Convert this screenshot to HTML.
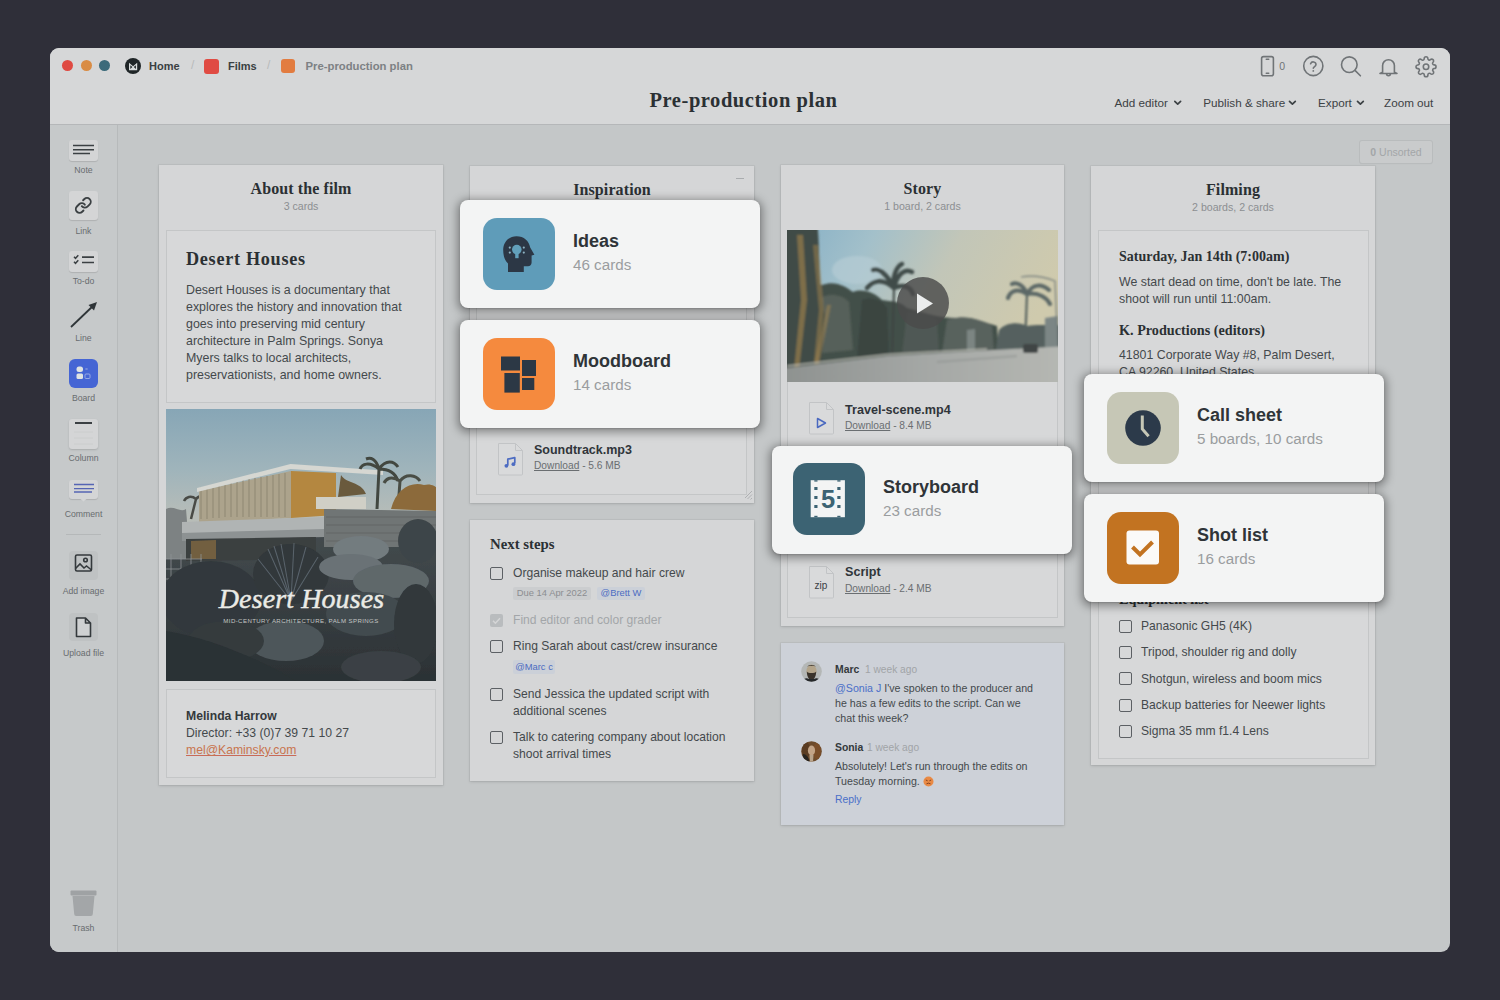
<!DOCTYPE html>
<html><head><meta charset="utf-8">
<style>
*{box-sizing:border-box;margin:0;padding:0}
html,body{width:1500px;height:1000px;overflow:hidden;background:#2f2f39;font-family:"Liberation Sans",sans-serif;color:#34393c}
.abs{position:absolute}
#win{position:absolute;left:50px;top:48px;width:1400px;height:904px;border-radius:9px;overflow:hidden;background:#c4c7c8}
#hdr{position:absolute;left:0;top:0;width:1400px;height:77px;background:#d6d7d8;border-bottom:1px solid #b5b7b9}
#side{position:absolute;left:0;top:77px;width:68px;height:827px;background:#c6c9ca;border-right:1px solid #b7babb}
.dot{position:absolute;top:12px;width:11px;height:11px;border-radius:50%}
.crumb{position:absolute;top:11px;font-size:11px;font-weight:bold;color:#3a3f42;line-height:14px}
.slash{position:absolute;top:10px;font-size:12px;color:#b8babb}
.menu{position:absolute;top:48px;font-size:11.7px;color:#3d4245;line-height:14px}
.chev{display:inline-block;width:5px;height:5px;border-right:1.5px solid #3d4245;border-bottom:1.5px solid #3d4245;transform:rotate(45deg);margin-left:5px;position:relative;top:-3px}
.sbtn{position:absolute;left:19px;width:29px;background:#d4d5d6;border-radius:3px;box-shadow:0 1px 1px rgba(0,0,0,.12)}
.slab{position:absolute;left:0;width:67px;text-align:center;font-size:8.7px;color:#686c6f;line-height:10px}
.col{position:absolute;background:#d5d6d7;box-shadow:0 0 0 1px #c9cbcc,0 1px 2px rgba(0,0,0,.18)}
.ctitle{position:absolute;left:0;width:100%;text-align:center;font-family:"Liberation Serif",serif;font-weight:bold;font-size:15px;color:#2b3033;line-height:18px}
.csub{position:absolute;left:0;width:100%;text-align:center;font-size:10px;color:#8d9093;line-height:12px}
.card{position:absolute;background:#d6d7d8;border:1px solid #c6c8c9}
.hl{position:absolute;width:300px;height:108px;background:#f3f4f4;border-radius:8px;box-shadow:0 2px 9px 3px rgba(0,0,0,.34),0 1px 2px rgba(0,0,0,.15)}
.hl .ic{position:absolute;left:23px;top:18px;width:72px;height:72px;border-radius:14px}
.hl .t{position:absolute;left:113px;top:30px;font-size:18px;font-weight:bold;color:#2f3438;line-height:22px}
.hl .s{position:absolute;left:113px;top:56px;font-size:15.2px;color:#9a9d9f;line-height:18px}
.txt{font-size:11.5px;color:#3e4347;line-height:17px}
.cb{position:absolute;width:12px;height:12px;border:1.3px solid #55595c;border-radius:2px}
.todo{position:absolute;font-size:11.5px;color:#3e4347;line-height:17px}
.tag{position:absolute;font-size:9px;line-height:13px;padding:0 4px;border-radius:2px}

.a{position:absolute}
</style></head><body>
<div id="win">
  <div id="hdr">
    <div class="dot" style="left:12px;background:#df4a42"></div>
    <div class="dot" style="left:31px;background:#d98c45"></div>
    <div class="dot" style="left:49px;background:#3c6a7a"></div>
    <div class="abs" style="left:74.9px;top:10px;width:16.4px;height:16.4px;border-radius:50%;background:#1f2527"></div>
    <svg class="abs" style="left:77px;top:11px" width="13" height="13" viewBox="0 0 13 13"><path d="M2 3.7 L6.1 7.3 L10.2 3.7 V11.2 H2 Z M3.3 6.2 L5.4 8.1 L3.3 10 Z M8.9 6.2 L6.8 8.1 L8.9 10 Z" fill="#d8dcdc" fill-rule="evenodd"/></svg>
    <div class="crumb" style="left:99px">Home</div>
    <div class="slash" style="left:141px">/</div>
    <div class="abs" style="left:154px;top:11px;width:15px;height:15px;border-radius:3px;background:#e04b43"></div>
    <div class="crumb" style="left:178px">Films</div>
    <div class="slash" style="left:217px">/</div>
    <div class="abs" style="left:231px;top:11px;width:14px;height:14px;border-radius:3px;background:#e27c40"></div>
    <div class="crumb" style="left:255.5px;color:#7d8184;font-size:11.3px">Pre-production plan</div>
    <div class="abs" style="left:0;top:40px;width:1387px;text-align:center;font-family:'Liberation Serif',serif;font-weight:bold;font-size:20.5px;letter-spacing:.55px;color:#2b3034;line-height:24px">Pre-production plan</div>
    <svg class="abs" style="left:1208px;top:6px" width="230" height="26" viewBox="0 0 230 26">
      <g fill="none" stroke="#707477" stroke-width="1.6" stroke-linecap="round" stroke-linejoin="round">
        <rect x="3.6" y="2.6" width="11.8" height="19.2" rx="2"/>
        <path d="M8.3 5.2 h2.4 M8.3 19.3 h2.4"/>
        <circle cx="55.3" cy="12" r="9.6"/>
        <path d="M52.6 9.7 a2.8 2.8 0 0 1 5.4 .9 c0 1.9-2.7 2.6-2.7 3.6"/>
        <circle cx="91.3" cy="10.7" r="7.8"/>
        <path d="M97 16.4 L102.4 21.8"/>
        <path d="M124.6 18.2 V11.6 a5.9 5.9 0 0 1 11.8 0 V18.2 l2.6 1.3 H122 z"/>
        <path d="M128.6 19.8 a1.9 1.9 0 0 0 3.8 0"/>
        <g transform="translate(157.1 1.8) scale(.91)" stroke-width="1.75"><circle cx="12" cy="12" r="3"/><path d="M19.4 15a1.65 1.65 0 0 0 .33 1.82l.06.06a2 2 0 0 1 0 2.83 2 2 0 0 1-2.83 0l-.06-.06a1.65 1.65 0 0 0-1.820-.33 1.65 1.65 0 0 0-1 1.51V21a2 2 0 0 1-2 2 2 2 0 0 1-2-2v-.09A1.65 1.65 0 0 0 9 19.4a1.65 1.65 0 0 0-1.82.33l-.06.06a2 2 0 0 1-2.83 0 2 2 0 0 1 0-2.83l.06-.06a1.65 1.65 0 0 0 .33-1.820 1.65 1.65 0 0 0-1.51-1H3a2 2 0 0 1-2-2 2 2 0 0 1 2-2h.09A1.65 1.65 0 0 0 4.6 9a1.65 1.65 0 0 0-.33-1.82l-.06-.06a2 2 0 0 1 0-2.83 2 2 0 0 1 2.83 0l.06.06a1.65 1.65 0 0 0 1.82.33H9a1.65 1.65 0 0 0 1-1.51V3a2 2 0 0 1 2-2 2 2 0 0 1 2 2v.09a1.65 1.65 0 0 0 1 1.51 1.65 1.65 0 0 0 1.82-.33l.06-.06a2 2 0 0 1 2.83 0 2 2 0 0 1 0 2.83l-.06.06a1.65 1.65 0 0 0-.33 1.82V9a1.65 1.65 0 0 0 1.51 1H21a2 2 0 0 1 2 2 2 2 0 0 1-2 2h-.09a1.65 1.65 0 0 0-1.51 1z"/></g>
      </g>
      <circle cx="55.3" cy="16.9" r=".9" fill="#707477"/>
      <text x="21.2" y="16.3" font-family="Liberation Sans" font-size="10.5" fill="#707477">0</text>
    </svg>
    <div class="menu" style="left:1064.5px">Add editor</div>
    <div class="menu" style="left:1153.3px">Publish &amp; share</div>
    <div class="menu" style="left:1268px">Export</div>
    <div class="menu" style="left:1334px">Zoom out</div>
    <svg class="abs" style="left:1120px;top:51px" width="250" height="8" viewBox="0 0 250 8"><g fill="none" stroke="#3d4245" stroke-width="1.7" stroke-linecap="round" stroke-linejoin="round"><path d="M4.8 2.3 l2.9 2.9 l2.9-2.9"/><path d="M119.5 2.3 l2.9 2.9 l2.9-2.9"/><path d="M187.5 2.3 l2.9 2.9 l2.9-2.9"/></g></svg>
  </div>
  <div id="side">
    <!-- y offsets relative to side top (page y - 125) -->
    <div class="sbtn" style="top:15px;height:21px"></div>
    <svg class="abs" style="left:19px;top:15px" width="29" height="21"><path d="M4 5.5h21M4 9.7h21M4 13.5h17" stroke="#3b4043" stroke-width="1.6"/></svg>
    <div class="slab" style="top:40px">Note</div>
    <div class="sbtn" style="top:66px;height:29px"></div>
    <svg class="abs" style="left:19px;top:66px" width="29" height="29" viewBox="0 0 29 29"><g transform="translate(5.3 5.4) scale(.75)" fill="none" stroke="#3b4043" stroke-width="2.5" stroke-linecap="round" stroke-linejoin="round"><path d="M10 13a5 5 0 0 0 7.54.54l3-3a5 5 0 0 0-7.07-7.07l-1.72 1.71"/><path d="M14 11a5 5 0 0 0-7.54-.54l-3 3a5 5 0 0 0 7.07 7.07l1.71-1.71"/></g></svg>
    <div class="slab" style="top:101px">Link</div>
    <div class="sbtn" style="top:126px;height:21px"></div>
    <svg class="abs" style="left:19px;top:126px" width="29" height="21" viewBox="0 0 29 21"><g fill="none" stroke="#3b4043" stroke-width="1.5"><path d="M5 5.8l1.5 1.5l2.8-3M5 10.8l1.5 1.5l2.8-3"/><path d="M13 6.2h12M13 11.5h12" stroke-width="1.7"/></g></svg>
    <div class="slab" style="top:151px">To-do</div>
    <svg class="abs" style="left:14px;top:172px" width="40" height="36" viewBox="0 0 40 36"><path d="M7 30 L30 8" stroke="#2f3538" stroke-width="1.8"/><path d="M33 5 L24.5 8 L30 13.5 Z" fill="#2f3538"/></svg>
    <div class="slab" style="top:208px">Line</div>
    <div class="abs" style="left:19px;top:234px;width:29px;height:29px;border-radius:6px;background:#4565d4"></div>
    <svg class="abs" style="left:19px;top:234px" width="29" height="29" viewBox="0 0 29 29"><rect x="7.5" y="7.5" width="6.5" height="5.5" rx="2.5" fill="#dfe3e2"/><rect x="7.5" y="14.5" width="6.5" height="5.5" rx="1.5" fill="#dfe3e2"/><path d="M16.5 9 l2 2 M16.5 11 l2-2" stroke="#8ea0dd" stroke-width=".8"/><rect x="16" y="15" width="5" height="4.5" rx="1" fill="none" stroke="#9fb0e6" stroke-width=".9"/></svg>
    <div class="slab" style="top:268px">Board</div>
    <div class="sbtn" style="top:294px;height:30px;box-shadow:0 1px 2px rgba(0,0,0,.15)"></div>
    <svg class="abs" style="left:19px;top:294px" width="29" height="30"><path d="M6 4h17" stroke="#3b4043" stroke-width="2"/><path d="M5 13h19M5 19h19M5 25h19" stroke="#c9cbcc" stroke-width=".8"/></svg>
    <div class="slab" style="top:328px">Column</div>
    <div class="sbtn" style="top:355px;height:19px"></div>
    <svg class="abs" style="left:19px;top:355px" width="29" height="22"><path d="M11.5 19h6l-3 2.5z" fill="#d4d5d6"/><path d="M5 4.5h20M5 8.6h20M5 12h18" stroke="#5665b4" stroke-width="1.4"/></svg>
    <div class="slab" style="top:384px">Comment</div>
    <div class="abs" style="left:16px;top:409px;width:35px;height:1px;background:#b5b8b9"></div>
    <div class="abs" style="left:19px;top:426px;width:29px;height:29px;border-radius:4px;background:#bfc2c3"></div>
    <svg class="abs" style="left:19px;top:426px" width="29" height="29" viewBox="0 0 29 29"><g fill="none" stroke="#34393c" stroke-width="1.6"><rect x="6.5" y="4" width="16" height="16" rx="1.5"/><circle cx="16.5" cy="9" r="1.8"/><path d="M6.5 17.5 l4.5-4.5 l4 4 l2.5-2 l5 4"/></g></svg>
    <div class="slab" style="top:460.5px">Add image</div>
    <div class="abs" style="left:19px;top:488px;width:29px;height:28px;border-radius:4px;background:#bfc2c3"></div>
    <svg class="abs" style="left:19px;top:488px" width="29" height="28" viewBox="0 0 29 28"><path d="M7.5 5 h9 l5 5 v13.5 h-14 z M16.5 5 v5 h5" fill="#cfd1d2" stroke="#34393c" stroke-width="1.6" stroke-linejoin="round"/></svg>
    <div class="slab" style="top:522.5px">Upload file</div>
    <svg class="abs" style="left:19px;top:764px" width="29" height="30" viewBox="0 0 29 30"><rect x="1.5" y="1.5" width="26" height="5" rx="1" fill="#9fa2a4"/><path d="M3.5 7 h22 l-1.7 18 a2 2 0 0 1 -2 2 h-14.6 a2 2 0 0 1 -2-2 z" fill="#a3a6a8"/></svg>
    <div class="slab" style="top:798px">Trash</div>
  </div>
  <div class="abs" style="left:1310px;top:93px;width:72px;height:22px;border-radius:2px;background:#c9cbcc;box-shadow:0 0 0 1px #b9bcbd,0 1px 1px rgba(0,0,0,.1);font-size:10.5px;color:#a3a6a8;text-align:center;line-height:22px"><b>0</b> Unsorted</div>
</div>

<div class="a" style="left:159px;top:165px;width:284px;height:620px;background:#d5d6d7;box-shadow:0 0 0 1px rgba(0,0,0,.035),0 1px 3px rgba(0,0,0,.13);"></div>
<div class="a" style="left:101.00px;top:179.20px;width:400px;font-family:'Liberation Serif',serif;font-size:16px;line-height:20.8px;font-weight:bold;color:#2b3033;letter-spacing:0.1px;text-align:center;" >About the film</div>
<div class="a" style="left:101.00px;top:199.94px;width:400px;font-family:'Liberation Sans',sans-serif;font-size:10.6px;line-height:13.78px;color:#8c8f92;text-align:center;" >3 cards</div>
<div class="a" style="left:166px;top:230px;width:270px;height:173px;background:#d7d8d9;border:1px solid #c4c6c7;"></div>
<div class="a" style="left:186.00px;top:247.83px;white-space:nowrap;font-family:'Liberation Serif',serif;font-size:18.2px;line-height:23.66px;font-weight:bold;color:#2b3033;letter-spacing:0.7px;" >Desert Houses</div>
<div class="a" style="left:186.00px;top:282.25px;white-space:nowrap;font-family:'Liberation Sans',sans-serif;font-size:12.4px;line-height:16.9px;color:#44494c;" >Desert Houses is a documentary that<br>explores the history and innovation that<br>goes into preserving mid century<br>architecture in Palm Springs. Sonya<br>Myers talks to local architects,<br>preservationists, and home owners.</div>
<svg class="a" style="left:166px;top:409px" width="270" height="272" viewBox="0 0 270 272">
<defs><linearGradient id="psky" x1="0" x2="0" y1="0" y2="1"><stop offset="0" stop-color="#87a6b6"/><stop offset=".22" stop-color="#9fb4bb"/><stop offset=".4" stop-color="#b8bdb8"/></linearGradient>
<linearGradient id="pbot" x1="0" x2="0" y1="0" y2="1"><stop offset="0" stop-color="#454c4f"/><stop offset="1" stop-color="#2b3134"/></linearGradient>
<filter id="pb"><feGaussianBlur stdDeviation=".6"/></filter></defs>
<rect width="270" height="272" fill="url(#psky)"/>
<g filter="url(#pb)">
<path d="M0 128 L270 118 L270 272 L0 272 Z" fill="url(#pbot)"/>
<path d="M0 100 C8 96 14 104 20 100 L24 150 L0 150 Z" fill="#7d8283"/>
<path d="M25 110 L30 90 M30 90 C25 86 20 88 18 92 M30 90 C35 85 40 86 42 90" stroke="#4a4c46" stroke-width="2.5" fill="none"/>
<path d="M33 82 L33 114 L125 109 L125 62 Z" fill="#aca38c"/>
<path d="M35 78 v32 M41 77 v33 M47 76 v33 M53 75 v34 M59 74 v34 M65 73 v35 M71 72 v36 M77 71 v37 M83 70 v38 M89 69 v39 M95 68 v40 M101 67 v41 M107 66 v42 M113 65 v43 M119 64 v44" stroke="#978f7a" stroke-width="1.4"/>
<path d="M125 62 L170 64 L170 106 L125 109 Z" fill="#b4873f"/>
<path d="M150 88 L200 88 L200 100 L150 100 Z" fill="#d0cfc6"/>
<path d="M31 79 L124.5 55 L217 61.5 L217 66 L124.5 60 L31 83 Z" fill="#d6d7d2"/>
<path d="M175 66 C180 75 195 72 200 85 L172 88 Z" fill="#6a5a3e"/>
<path d="M211 100 L213 60 M213 60 C203 52 196 55 194 60 M213 60 C210 50 205 48 200 50 M213 60 C220 50 228 52 232 58 M213 60 C225 60 230 66 232 72" stroke="#424740" stroke-width="3" fill="none"/>
<path d="M232 100 L234 72 M234 72 C225 66 220 70 218 74 M234 72 C240 64 250 66 254 72" stroke="#4a4d44" stroke-width="3" fill="none"/>
<path d="M225 100 C230 80 245 72 258 76 C265 74 270 78 270 78 L270 102 Z" fill="#8c6b3a"/>
<path d="M16 113 L159 108 L159 122 L16 127 Z" fill="#b0b4b4"/>
<path d="M16 124 L158 120 L158 128 L16 132 Z" fill="#8d9293"/>
<path d="M20 130 L150 128 L150 150 L20 152 Z" fill="#3b3f3f"/>
<path d="M25 132 L50 131 L50 150 L25 150 Z" fill="#8a6d40" opacity=".7"/>
<path d="M158 100 L270 102 L270 138 L158 138 Z" fill="#707575"/>
<path d="M160 108 H270 M160 116 H270 M160 124 H270 M160 132 H270" stroke="#626767" stroke-width="1"/>
<path d="M0 150 H36 M0 160 H36 M0 170 H36 M5 145 V190 M15 145 V190 M25 145 V190 M35 145 V190" stroke="#8d9394" stroke-width=".8"/>
<ellipse cx="45" cy="190" rx="50" ry="38" fill="#32393c"/>
<ellipse cx="125" cy="165" rx="38" ry="30" fill="#30373a"/>
<path d="M125 192 L92 150 M125 192 L102 140 M125 192 L115 135 M125 192 L128 134 M125 192 L140 138 M125 192 L152 148 M125 192 L108 137" stroke="#59626a" stroke-width="1.1"/>
<ellipse cx="195" cy="140" rx="28" ry="13" fill="#737b7f"/>
<ellipse cx="185" cy="158" rx="32" ry="13" fill="#6a7276"/>
<ellipse cx="225" cy="172" rx="38" ry="17" fill="#5e676b"/>
<ellipse cx="252" cy="132" rx="20" ry="22" fill="#3e4548"/>
<ellipse cx="200" cy="205" rx="40" ry="22" fill="#434b4f"/>
<ellipse cx="250" cy="215" rx="22" ry="40" fill="#30373a"/>
<ellipse cx="120" cy="232" rx="38" ry="20" fill="#4d565a"/>
<ellipse cx="60" cy="232" rx="38" ry="20" fill="#343b3e"/>
<path d="M0 222 C40 228 90 248 130 272 L0 272 Z" fill="#2b3134"/>
<ellipse cx="215" cy="258" rx="40" ry="16" fill="#3a4144"/>
</g>
<text x="135.5" y="198.8" text-anchor="middle" font-family="Liberation Serif" font-style="italic" font-size="28" fill="#ebebe6" stroke="#ebebe6" stroke-width=".45" letter-spacing=".1">Desert Houses</text>
<text x="135" y="214" text-anchor="middle" font-family="Liberation Sans" font-size="6.1" fill="#c3c6c4" letter-spacing=".4">MID-CENTURY ARCHITECTURE, PALM SPRINGS</text>
</svg>
<div class="a" style="left:166px;top:689px;width:270px;height:89px;background:#d7d8d9;border:1px solid #c4c6c7;"></div>
<div class="a" style="left:186.00px;top:709.34px;white-space:nowrap;font-family:'Liberation Sans',sans-serif;font-size:12.2px;line-height:15.86px;font-weight:bold;color:#34393c;" >Melinda Harrow</div>
<div class="a" style="left:186.00px;top:726.34px;white-space:nowrap;font-family:'Liberation Sans',sans-serif;font-size:12.2px;line-height:15.86px;color:#44494c;" >Director: +33 (0)7 39 71 10 27</div>
<div class="a" style="left:186.00px;top:743.34px;white-space:nowrap;font-family:'Liberation Sans',sans-serif;font-size:12.2px;line-height:15.86px;color:#c8744e;text-decoration:underline;text-decoration-color:#c86a58;" >mel@Kaminsky.com</div>
<div class="a" style="left:470px;top:166px;width:284px;height:337px;background:#d5d6d7;box-shadow:0 0 0 1px rgba(0,0,0,.035),0 1px 3px rgba(0,0,0,.13);"></div>
<div class="a" style="left:412.00px;top:180.20px;width:400px;font-family:'Liberation Serif',serif;font-size:16px;line-height:20.8px;font-weight:bold;color:#2b3033;letter-spacing:0.1px;text-align:center;" >Inspiration</div>
<div class="a" style="left:412.00px;top:200.94px;width:400px;font-family:'Liberation Sans',sans-serif;font-size:10.6px;line-height:13.78px;color:#8c8f92;text-align:center;" ></div>
<div class="a" style="left:736px;top:178px;width:8px;height:1px;background:#a9acae"></div>
<div class="a" style="left:476px;top:232px;width:271px;height:263px;background:#d7d8d9;border:1px solid #c4c6c7;"></div>
<svg class="a" style="left:497px;top:442px" width="27" height="34" viewBox="0 0 27 34"><path d="M1.5 1.5 h17 l7 7 v23.5 a1 1 0 0 1 -1 1 h-22 a1 1 0 0 1 -1 -1 z" fill="#d9dadb" stroke="#c2c4c6" stroke-width="1"/><path d="M18.5 1.5 v7 h7" fill="none" stroke="#c2c4c6" stroke-width="1"/><path d="M10.8 23.5 v-6.3 l7-1.6 v6" fill="none" stroke="#4d6cc2" stroke-width="1.7" stroke-linejoin="round"/><circle cx="9.4" cy="23.8" r="1.9" fill="#4d6cc2"/><circle cx="16.4" cy="22.2" r="1.9" fill="#4d6cc2"/></svg>
<div class="a" style="left:534.00px;top:442.04px;white-space:nowrap;font-family:'Liberation Sans',sans-serif;font-size:12.5px;line-height:16.25px;font-weight:bold;color:#30353a;" >Soundtrack.mp3</div>
<div class="a" style="left:534.00px;top:459.34px;white-space:nowrap;font-family:'Liberation Sans',sans-serif;font-size:10.2px;line-height:13.26px;color:#6a6e71;" ><span style="text-decoration:underline">Download</span> - 5.6 MB</div>
<svg class="a" style="left:743px;top:489px" width="10" height="12" viewBox="0 0 10 12"><path d="M9 2 L2 9 M9 5.5 L4.5 10 M9 9 L7.5 10.5" stroke="#a9acae" stroke-width=".9"/></svg>
<div class="a" style="left:470px;top:519.5px;width:284px;height:261.5px;background:#d5d6d7;box-shadow:0 0 0 1px rgba(0,0,0,.035),0 1px 3px rgba(0,0,0,.13);"></div>
<div class="a" style="left:490.00px;top:535.38px;white-space:nowrap;font-family:'Liberation Serif',serif;font-size:14.8px;line-height:19.24px;font-weight:bold;color:#2b3033;" >Next steps</div>
<div class="a" style="left:490px;top:567px;width:13px;height:13px;border:1.3px solid #5c6064;border-radius:2px;box-sizing:border-box;"></div>
<div class="a" style="left:513.00px;top:565.11px;white-space:nowrap;font-family:'Liberation Sans',sans-serif;font-size:12.1px;line-height:17px;color:#44494c;" >Organise makeup and hair crew</div>
<div class="a" style="left:513px;top:587px;width:78px;height:13px;background:#cbcdcf;border-radius:2px"></div>
<div class="a" style="left:513.00px;top:587.43px;width:78px;font-family:'Liberation Sans',sans-serif;font-size:9.4px;line-height:12.22px;color:#8b8e91;text-align:center;" >Due 14 Apr 2022</div>
<div class="a" style="left:597px;top:587px;width:48px;height:13px;background:#cbd0d8;border-radius:2px"></div>
<div class="a" style="left:597.00px;top:587.43px;width:48px;font-family:'Liberation Sans',sans-serif;font-size:9.4px;line-height:12.22px;color:#4c6cc2;text-align:center;" >@Brett W</div>
<div class="a" style="left:490px;top:614px;width:13px;height:13px;background:#b9bcbe;border-radius:2px;"></div>
<svg class="a" style="left:490px;top:614px" width="13" height="13" viewBox="0 0 13 13"><path d="M3 6.8 l2.4 2.4 l4.6-5" fill="none" stroke="#d5d6d7" stroke-width="1.5"/></svg>
<div class="a" style="left:513.00px;top:612.11px;white-space:nowrap;font-family:'Liberation Sans',sans-serif;font-size:12.1px;line-height:17px;color:#a3a6a9;" >Find editor and color grader</div>
<div class="a" style="left:490px;top:640px;width:13px;height:13px;border:1.3px solid #5c6064;border-radius:2px;box-sizing:border-box;"></div>
<div class="a" style="left:513.00px;top:638.11px;white-space:nowrap;font-family:'Liberation Sans',sans-serif;font-size:12.1px;line-height:17px;color:#44494c;" >Ring Sarah about cast/crew insurance</div>
<div class="a" style="left:513px;top:660px;width:42px;height:14px;background:#cbd0d8;border-radius:2px"></div>
<div class="a" style="left:513.00px;top:660.63px;width:42px;font-family:'Liberation Sans',sans-serif;font-size:9.4px;line-height:12.22px;color:#4c6cc2;text-align:center;" >@Marc c</div>
<div class="a" style="left:490px;top:688px;width:13px;height:13px;border:1.3px solid #5c6064;border-radius:2px;box-sizing:border-box;"></div>
<div class="a" style="left:513.00px;top:686.11px;white-space:nowrap;font-family:'Liberation Sans',sans-serif;font-size:12.1px;line-height:17px;color:#44494c;" >Send Jessica the updated script with<br>additional scenes</div>
<div class="a" style="left:490px;top:731px;width:13px;height:13px;border:1.3px solid #5c6064;border-radius:2px;box-sizing:border-box;"></div>
<div class="a" style="left:513.00px;top:729.11px;white-space:nowrap;font-family:'Liberation Sans',sans-serif;font-size:12.1px;line-height:17px;color:#44494c;" >Talk to catering company about location<br>shoot arrival times</div>
<div class="a" style="left:781px;top:165px;width:283px;height:461px;background:#d5d6d7;box-shadow:0 0 0 1px rgba(0,0,0,.035),0 1px 3px rgba(0,0,0,.13);"></div>
<div class="a" style="left:722.50px;top:179.20px;width:400px;font-family:'Liberation Serif',serif;font-size:16px;line-height:20.8px;font-weight:bold;color:#2b3033;letter-spacing:0.1px;text-align:center;" >Story</div>
<div class="a" style="left:722.50px;top:199.94px;width:400px;font-family:'Liberation Sans',sans-serif;font-size:10.6px;line-height:13.78px;color:#8c8f92;text-align:center;" >1 board, 2 cards</div>
<div class="a" style="left:787px;top:230px;width:271px;height:388px;background:#d7d8d9;border:1px solid #c4c6c7;"></div>
<svg class="a" style="left:787px;top:230px" width="271" height="152" viewBox="0 0 271 152">
<defs><linearGradient id="vsky" x1="0" x2="1" y1="0" y2=".3"><stop offset="0" stop-color="#86b0c6"/><stop offset=".3" stop-color="#a3c0ca"/><stop offset=".6" stop-color="#c2c6b8"/><stop offset="1" stop-color="#cfcaad"/></linearGradient>
<linearGradient id="vroad" x1="0" x2="1" y1="0" y2="0"><stop offset="0" stop-color="#8d918f"/><stop offset=".5" stop-color="#a4a7a5"/><stop offset="1" stop-color="#b6b8b3"/></linearGradient>
<filter id="vb" x="-5%" y="-5%" width="110%" height="110%"><feGaussianBlur stdDeviation="1"/></filter></defs>
<rect width="271" height="152" fill="url(#vsky)"/>
<g filter="url(#vb)">
<ellipse cx="70" cy="40" rx="25" ry="14" fill="#b5ccd4" opacity=".7"/>
<path d="M0 58 C12 48 22 52 35 55 C48 50 58 56 66 62 C76 58 88 63 95 70 C105 72 112 70 120 78 C135 82 150 88 170 88 C185 86 195 92 210 96 L212 126 L0 138 Z" fill="#434f4a"/>
<path d="M30 70 C40 62 55 64 62 72 L66 120 L25 124 Z" fill="#56605a"/>
<path d="M120 82 C132 80 145 84 150 90 L152 122 L115 124 Z" fill="#4f5954"/>
<path d="M160 90 C175 85 190 88 205 96 L207 122 L155 123 Z" fill="#58625d"/>
<path d="M75 70 C85 66 95 70 100 78 L102 126 L70 128 Z" fill="#3a4541"/>
<path d="M-10 -10 L30 -10 C34 25 30 55 38 85 L34 140 L-10 145 Z" fill="#3f4b46"/>
<path d="M10 5 L16 5 L20 70 L12 140 L7 140 L14 70 Z" fill="#947a4c" opacity=".75"/>
<path d="M26 15 L31 15 L37 80 L31 132 L27 132 L32 80 Z" fill="#9d804e" opacity=".55"/>
<path d="M40 75 L44 75 L30 145 L25 145 Z" fill="#a88852" opacity=".5"/>
<path d="M105 132 L107 58" stroke="#3d4543" stroke-width="2"/>
<path d="M107 58 C96 48 86 50 80 58 M107 58 C100 44 92 38 86 40 M107 58 C110 44 118 38 125 42 M107 58 C118 53 124 58 126 64 M107 58 C105 46 110 36 115 34" stroke="#414b48" stroke-width="4.5" fill="none" stroke-linecap="round"/>
<path d="M238 116 L240 64" stroke="#57625f" stroke-width="2.2"/>
<path d="M240 64 C229 57 223 62 221 68 M240 64 C236 54 229 52 225 54 M240 64 C246 53 255 54 262 60 M240 64 C252 62 260 68 263 74" stroke="#5b6866" stroke-width="4" fill="none" stroke-linecap="round"/>
<path d="M212 100 C220 92 232 92 240 96 C252 94 262 96 281 95 L281 124 L208 124 Z" fill="#55615f"/>
<path d="M258 88 L271 86 L271 118 L258 118 Z" fill="#7b8685"/>
<path d="M180 100 L188 99 L188 120 L180 121 Z" fill="#8a9493" opacity=".7"/>
<path d="M234 47 C246 45 258 47 268 51 L271 120" stroke="#737b7a" stroke-width="1.2" fill="none"/>
<path d="M-10 139 L100 126 L281 116 L281 165 L-10 165 Z" fill="url(#vroad)"/>
<path d="M0 136 L100 124.5 L200 119" stroke="#c4c4bc" stroke-width="1.6" fill="none" opacity=".8"/>
<rect x="236" y="114" width="15" height="9" rx="2" fill="#3f4545"/>
<path d="M150 132 L230 126" stroke="#8f9391" stroke-width="2.5" opacity=".5"/>
</g>
<circle cx="136" cy="73" r="26" fill="#4a4b4b" opacity=".82"/>
<path d="M130 63.5 L146 73.5 L130 83.5 Z" fill="#ebeded"/>
</svg>
<svg class="a" style="left:808px;top:401px" width="27" height="34" viewBox="0 0 27 34"><path d="M1.5 1.5 h17 l7 7 v23.5 a1 1 0 0 1 -1 1 h-22 a1 1 0 0 1 -1 -1 z" fill="#d9dadb" stroke="#c2c4c6" stroke-width="1"/><path d="M18.5 1.5 v7 h7" fill="none" stroke="#c2c4c6" stroke-width="1"/><path d="M9.5 17.5 v9 l8 -4.5 z" fill="none" stroke="#4a69c0" stroke-width="1.5" stroke-linejoin="round"/></svg>
<div class="a" style="left:845.00px;top:401.94px;white-space:nowrap;font-family:'Liberation Sans',sans-serif;font-size:12.6px;line-height:16.38px;font-weight:bold;color:#30353a;" >Travel-scene.mp4</div>
<div class="a" style="left:845.00px;top:419.34px;white-space:nowrap;font-family:'Liberation Sans',sans-serif;font-size:10.2px;line-height:13.26px;color:#6a6e71;" ><span style="text-decoration:underline">Download</span> - 8.4 MB</div>
<div class="a" style="left:787px;top:446px;width:271px;height:172px;background:#d7d8d9;border:1px solid #c4c6c7;"></div>
<svg class="a" style="left:808px;top:565px" width="27" height="34" viewBox="0 0 27 34"><path d="M1.5 1.5 h17 l7 7 v23.5 a1 1 0 0 1 -1 1 h-22 a1 1 0 0 1 -1 -1 z" fill="#d9dadb" stroke="#c2c4c6" stroke-width="1"/><path d="M18.5 1.5 v7 h7" fill="none" stroke="#c2c4c6" stroke-width="1"/><text x="13" y="24" text-anchor="middle" font-family="Liberation Sans" font-size="10" fill="#3b4044">zip</text></svg>
<div class="a" style="left:845.00px;top:564.44px;white-space:nowrap;font-family:'Liberation Sans',sans-serif;font-size:12.6px;line-height:16.38px;font-weight:bold;color:#30353a;" >Script</div>
<div class="a" style="left:845.00px;top:581.84px;white-space:nowrap;font-family:'Liberation Sans',sans-serif;font-size:10.2px;line-height:13.26px;color:#6a6e71;" ><span style="text-decoration:underline">Download</span> - 2.4 MB</div>
<div class="a" style="left:781px;top:643px;width:283px;height:182px;background:#cdd1d8;box-shadow:0 0 0 1px rgba(0,0,0,.035),0 1px 3px rgba(0,0,0,.13);"></div>
<svg class="a" style="left:801px;top:661px" width="21" height="21" viewBox="0 0 21 21"><defs><clipPath id="av1"><circle cx="10.5" cy="10.5" r="10.3"/></clipPath></defs><g clip-path="url(#av1)"><rect width="21" height="21" fill="#b4b7b6"/><ellipse cx="10.5" cy="10" rx="5" ry="6.5" fill="#b3a48a"/><path d="M5.5 6.5 C6 3 15 3 15.5 6.5 L15 5.5 C13 4.5 8 4.5 6 5.5 Z" fill="#2e2a26"/><path d="M5.8 10.5 C6 16 8 19 10.5 19 C13 19 15 16 15.2 10.5 C14 12.5 7 12.5 5.8 10.5 Z" fill="#3a332b"/><path d="M1 21 C3 16.5 6 17 8 18 L13 18 C15 17 18 16.5 20 21 Z" fill="#25282a"/></g></svg>
<div class="a" style="left:835.00px;top:662.64px;white-space:nowrap;font-family:'Liberation Sans',sans-serif;font-size:10.4px;line-height:13.52px;font-weight:bold;color:#34393c;" >Marc</div>
<div class="a" style="left:865.00px;top:662.84px;white-space:nowrap;font-family:'Liberation Sans',sans-serif;font-size:10.2px;line-height:13.26px;color:#a1a4a7;" >1 week ago</div>
<div class="a" style="left:835.00px;top:680.86px;white-space:nowrap;font-family:'Liberation Sans',sans-serif;font-size:10.65px;line-height:14.9px;color:#44494c;" ><span style="color:#4a6fc8">@Sonia J</span> I've spoken to the producer and<br>he has a few edits to the script. Can we<br>chat this week?</div>
<svg class="a" style="left:801px;top:740.5px" width="21" height="21" viewBox="0 0 21 21"><defs><clipPath id="av2"><circle cx="10.5" cy="10.5" r="10.3"/></clipPath></defs><g clip-path="url(#av2)"><rect width="21" height="21" fill="#6d4b2c"/><ellipse cx="5" cy="9" rx="4" ry="8" fill="#5a3c22"/><ellipse cx="16" cy="10" rx="4" ry="8" fill="#7a4e2a"/><ellipse cx="10.5" cy="9.5" rx="3.6" ry="5" fill="#c3a487"/><path d="M8.5 14 L12.5 14 L12 21 L9 21 Z" fill="#b9a48c"/><path d="M2 13 C5 13 8 16 8.5 21 L0 21 Z" fill="#27241f"/></g></svg>
<div class="a" style="left:835.00px;top:741.14px;white-space:nowrap;font-family:'Liberation Sans',sans-serif;font-size:10.4px;line-height:13.52px;font-weight:bold;color:#34393c;" >Sonia</div>
<div class="a" style="left:867.00px;top:741.34px;white-space:nowrap;font-family:'Liberation Sans',sans-serif;font-size:10.2px;line-height:13.26px;color:#a1a4a7;" >1 week ago</div>
<div class="a" style="left:835.00px;top:759.31px;white-space:nowrap;font-family:'Liberation Sans',sans-serif;font-size:10.65px;line-height:15px;color:#44494c;" >Absolutely! Let's run through the edits on<br>Tuesday morning. <svg width="11" height="11" viewBox="0 0 11 11" style="vertical-align:-1.5px"><circle cx="5.5" cy="5.5" r="5" fill="#e98a45"/><path d="M2.8 4 l1.8 .8 M8.2 4 l-1.8 .8" stroke="#7a3a1a" stroke-width=".9"/><path d="M3.5 7.8 q2-1.3 4 0" stroke="#7a3a1a" stroke-width=".9" fill="none"/></svg></div>
<div class="a" style="left:835.00px;top:792.64px;white-space:nowrap;font-family:'Liberation Sans',sans-serif;font-size:10.4px;line-height:13.52px;color:#4a6fc8;" >Reply</div>
<div class="a" style="left:1091px;top:166px;width:284px;height:599px;background:#d5d6d7;box-shadow:0 0 0 1px rgba(0,0,0,.035),0 1px 3px rgba(0,0,0,.13);"></div>
<div class="a" style="left:1033.00px;top:180.20px;width:400px;font-family:'Liberation Serif',serif;font-size:16px;line-height:20.8px;font-weight:bold;color:#2b3033;letter-spacing:0.1px;text-align:center;" >Filming</div>
<div class="a" style="left:1033.00px;top:200.94px;width:400px;font-family:'Liberation Sans',sans-serif;font-size:10.6px;line-height:13.78px;color:#8c8f92;text-align:center;" >2 boards, 2 cards</div>
<div class="a" style="left:1098px;top:230px;width:271px;height:529px;background:#d7d8d9;border:1px solid #c4c6c7;"></div>
<div class="a" style="left:1119.00px;top:247.68px;white-space:nowrap;font-family:'Liberation Serif',serif;font-size:14px;line-height:18.2px;font-weight:bold;color:#2b3033;" >Saturday, Jan 14th (7:00am)</div>
<div class="a" style="left:1119.00px;top:274.32px;white-space:nowrap;font-family:'Liberation Sans',sans-serif;font-size:12.35px;line-height:16.8px;color:#44494c;" >We start dead on time, don&#x27;t be late. The<br>shoot will run until 11:00am.</div>
<div class="a" style="left:1119.00px;top:321.28px;white-space:nowrap;font-family:'Liberation Serif',serif;font-size:14.2px;line-height:18.46px;font-weight:bold;color:#2b3033;" >K. Productions (editors)</div>
<div class="a" style="left:1119.00px;top:347.02px;white-space:nowrap;font-family:'Liberation Sans',sans-serif;font-size:12.35px;line-height:16.8px;color:#44494c;" >41801 Corporate Way #8, Palm Desert,<br>CA 92260, United States</div>
<div class="a" style="left:1119.00px;top:589.98px;white-space:nowrap;font-family:'Liberation Serif',serif;font-size:14.2px;line-height:18.46px;font-weight:bold;color:#2b3033;" >Equipment list</div>
<div class="a" style="left:1119px;top:620.0px;width:13px;height:13px;border:1.3px solid #5c6064;border-radius:2px;box-sizing:border-box;"></div>
<div class="a" style="left:1141.00px;top:618.11px;white-space:nowrap;font-family:'Liberation Sans',sans-serif;font-size:12.1px;line-height:17px;color:#44494c;" >Panasonic GH5 (4K)</div>
<div class="a" style="left:1119px;top:646.2px;width:13px;height:13px;border:1.3px solid #5c6064;border-radius:2px;box-sizing:border-box;"></div>
<div class="a" style="left:1141.00px;top:644.31px;white-space:nowrap;font-family:'Liberation Sans',sans-serif;font-size:12.1px;line-height:17px;color:#44494c;" >Tripod, shoulder rig and dolly</div>
<div class="a" style="left:1119px;top:672.4px;width:13px;height:13px;border:1.3px solid #5c6064;border-radius:2px;box-sizing:border-box;"></div>
<div class="a" style="left:1141.00px;top:670.51px;white-space:nowrap;font-family:'Liberation Sans',sans-serif;font-size:12.1px;line-height:17px;color:#44494c;" >Shotgun, wireless and boom mics</div>
<div class="a" style="left:1119px;top:698.6px;width:13px;height:13px;border:1.3px solid #5c6064;border-radius:2px;box-sizing:border-box;"></div>
<div class="a" style="left:1141.00px;top:696.71px;white-space:nowrap;font-family:'Liberation Sans',sans-serif;font-size:12.1px;line-height:17px;color:#44494c;" >Backup batteries for Neewer lights</div>
<div class="a" style="left:1119px;top:724.8px;width:13px;height:13px;border:1.3px solid #5c6064;border-radius:2px;box-sizing:border-box;"></div>
<div class="a" style="left:1141.00px;top:722.91px;white-space:nowrap;font-family:'Liberation Sans',sans-serif;font-size:12.1px;line-height:17px;color:#44494c;" >Sigma 35 mm f1.4 Lens</div>
<div class="a hl" style="left:460px;top:200px"><div class="ic" style="background:#5f9cb9;left:23px;top:18px"><svg width="72" height="72" viewBox="0 0 72 72"><path d="M25 54 V45.5 C21.5 42 20.2 37.5 20.2 32 C20.2 24 26 18.2 33.5 18.2 C41 18.2 46 23 47.2 29.5 L51.4 36.8 L48.6 37.6 V44.5 C48.6 46.6 47 48.2 45 48.2 H40.8 V54 Z" fill="#2c3745"/><circle cx="33.8" cy="31.6" r="4.8" fill="#62a0bb"/><rect x="32.2" y="35" width="3.4" height="5.2" fill="#62a0bb"/><g fill="#8fb3c3"><circle cx="26.8" cy="29.6" r="1.1"/><circle cx="26.8" cy="34.6" r="1.1"/><circle cx="40.8" cy="29.6" r="1.1"/><circle cx="40.8" cy="34.6" r="1.1"/></g></svg></div><div class="t" style="left:113px">Ideas</div><div class="s" style="left:113px">46 cards</div></div>
<div class="a hl" style="left:460px;top:320px"><div class="ic" style="background:#f58a3e;left:23px;top:18px"><svg width="72" height="72" viewBox="0 0 72 72"><g fill="#2c3845"><rect x="18" y="18.5" width="19" height="14"/><rect x="39" y="22" width="14" height="16"/><rect x="21.4" y="35" width="15.4" height="19.6"/><rect x="39" y="40" width="12.3" height="12"/></g></svg></div><div class="t" style="left:113px">Moodboard</div><div class="s" style="left:113px">14 cards</div></div>
<div class="a hl" style="left:772px;top:446px"><div class="ic" style="background:#3c6373;left:21px;top:17px"><svg width="72" height="72" viewBox="0 0 72 72"><rect x="17.7" y="17.2" width="34.2" height="37" fill="#f3f4f4"/><g fill="#3c6373"><rect x="21.3" y="17.2" width="3.2" height="1.4"/><rect x="44.3" y="17.2" width="3.2" height="1.4"/><rect x="21.3" y="52.8" width="3.2" height="1.4"/><rect x="44.3" y="52.8" width="3.2" height="1.4"/><rect x="21.3" y="24" width="3.2" height="3"/><rect x="21.3" y="33" width="3.2" height="3"/><rect x="21.3" y="42" width="3.2" height="3"/><rect x="44.3" y="24" width="3.2" height="3"/><rect x="44.3" y="33" width="3.2" height="3"/><rect x="44.3" y="42" width="3.2" height="3"/></g><text x="35" y="44.7" text-anchor="middle" font-family="Liberation Sans" font-weight="bold" font-size="25.5" fill="#3c6373">5</text></svg></div><div class="t" style="left:111px">Storyboard</div><div class="s" style="left:111px">23 cards</div></div>
<div class="a hl" style="left:1084px;top:374px"><div class="ic" style="background:#c6c7b6;left:23px;top:18px"><svg width="72" height="72" viewBox="0 0 72 72"><circle cx="36" cy="36" r="17.8" fill="#2c3a4a"/><path d="M35.3 23.5 v13.5 l6.3 7.2" fill="none" stroke="#c6c7b6" stroke-width="3"/></svg></div><div class="t" style="left:113px">Call sheet</div><div class="s" style="left:113px">5 boards, 10 cards</div></div>
<div class="a hl" style="left:1084px;top:494px"><div class="ic" style="background:#c27321;left:23px;top:18px"><svg width="72" height="72" viewBox="0 0 72 72"><rect x="19.5" y="18.5" width="32.5" height="34" rx="3" fill="#fbfaf8"/><path d="M25.5 35 l7.5 7.5 l12.5 -12.5" fill="none" stroke="#c27321" stroke-width="4"/></svg></div><div class="t" style="left:113px">Shot list</div><div class="s" style="left:113px">16 cards</div></div>
</body></html>
